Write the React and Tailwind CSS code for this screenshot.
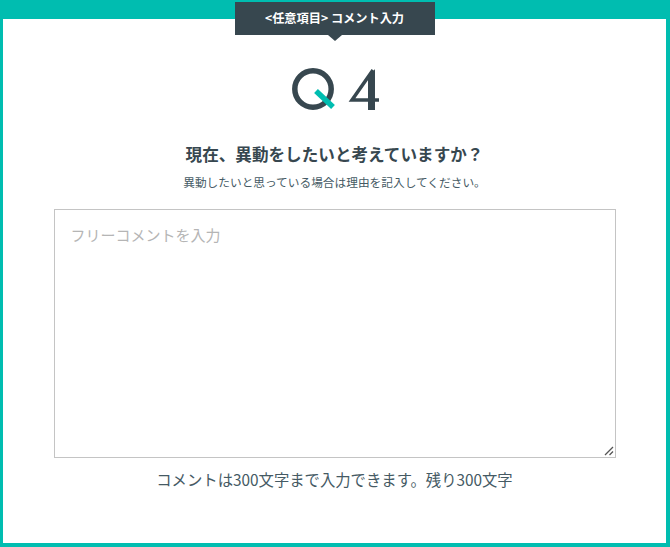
import React from 'react';

const jp = "font-['Noto_Sans_CJK_JP','Liberation_Sans',sans-serif]";

const Logo = () => (
  <svg width="88" height="44" viewBox="0 0 88 44" fill="none">
    <circle cx="21" cy="21" r="18.2" stroke="#37474f" strokeWidth="5.5" />
    <path d="M24 23 L41 39" stroke="#00bdb0" strokeWidth="5.5" />
    <path d="M81 2 L60 32 H87" stroke="#37474f" strokeWidth="3.5" />
    <path d="M83 1 L76 10 V42 H83 Z" fill="#37474f" />
  </svg>
);

const Grip = () => (
  <svg className="absolute right-[2px] bottom-[2px] pointer-events-none" width="10" height="10" viewBox="0 0 10 10" fill="none">
    <path d="M1 9 L9 1 M5.5 9 L9 5.5" stroke="#555" strokeWidth="1.3" />
  </svg>
);

export default function App() {
  return (
    <div className={`w-[670px] h-[547px] bg-white border-[#00bdb0] border-t-[19px] border-l-[3px] border-r-[4px] border-b-[4px] flex flex-col items-center text-[#37474f] ${jp}`}>
      <div className="relative -mt-[17px] w-[200px] h-[33px] shrink-0 bg-[#37474f] flex items-center justify-center text-white text-[12.2px] font-bold">
        &lt;任意項目&gt; コメント入力
        <div className="absolute left-1/2 -translate-x-1/2 top-full w-0 h-0 border-l-[7px] border-r-[7px] border-t-[6px] border-l-transparent border-r-transparent border-t-[#37474f]" />
      </div>
      <div className="mt-[33px] shrink-0 ml-[3px]">
        <Logo />
      </div>
      <h1 className="mt-[30px] text-[16.6px] leading-[24px] font-bold">現在、異動をしたいと考えていますか？</h1>
      <p className="mt-[7px] text-[11.7px] leading-[18px] text-[#455a64]">異動したいと思っている場合は理由を記入してください。</p>
      <div className="relative mt-[18px] w-[562px] h-[249px] shrink-0">
        <textarea
          className="block w-full h-full resize-none border border-[#c4c4c4] px-[16px] py-[13px] text-[15px] leading-[24px] outline-none placeholder:text-[#b5b5b5]"
          placeholder="フリーコメントを入力"
        />
        <Grip />
      </div>
      <p className="mt-[10px] text-[15.35px] leading-[22px] text-[#455a64]">コメントは300文字まで入力できます。残り300文字</p>
    </div>
  );
}
